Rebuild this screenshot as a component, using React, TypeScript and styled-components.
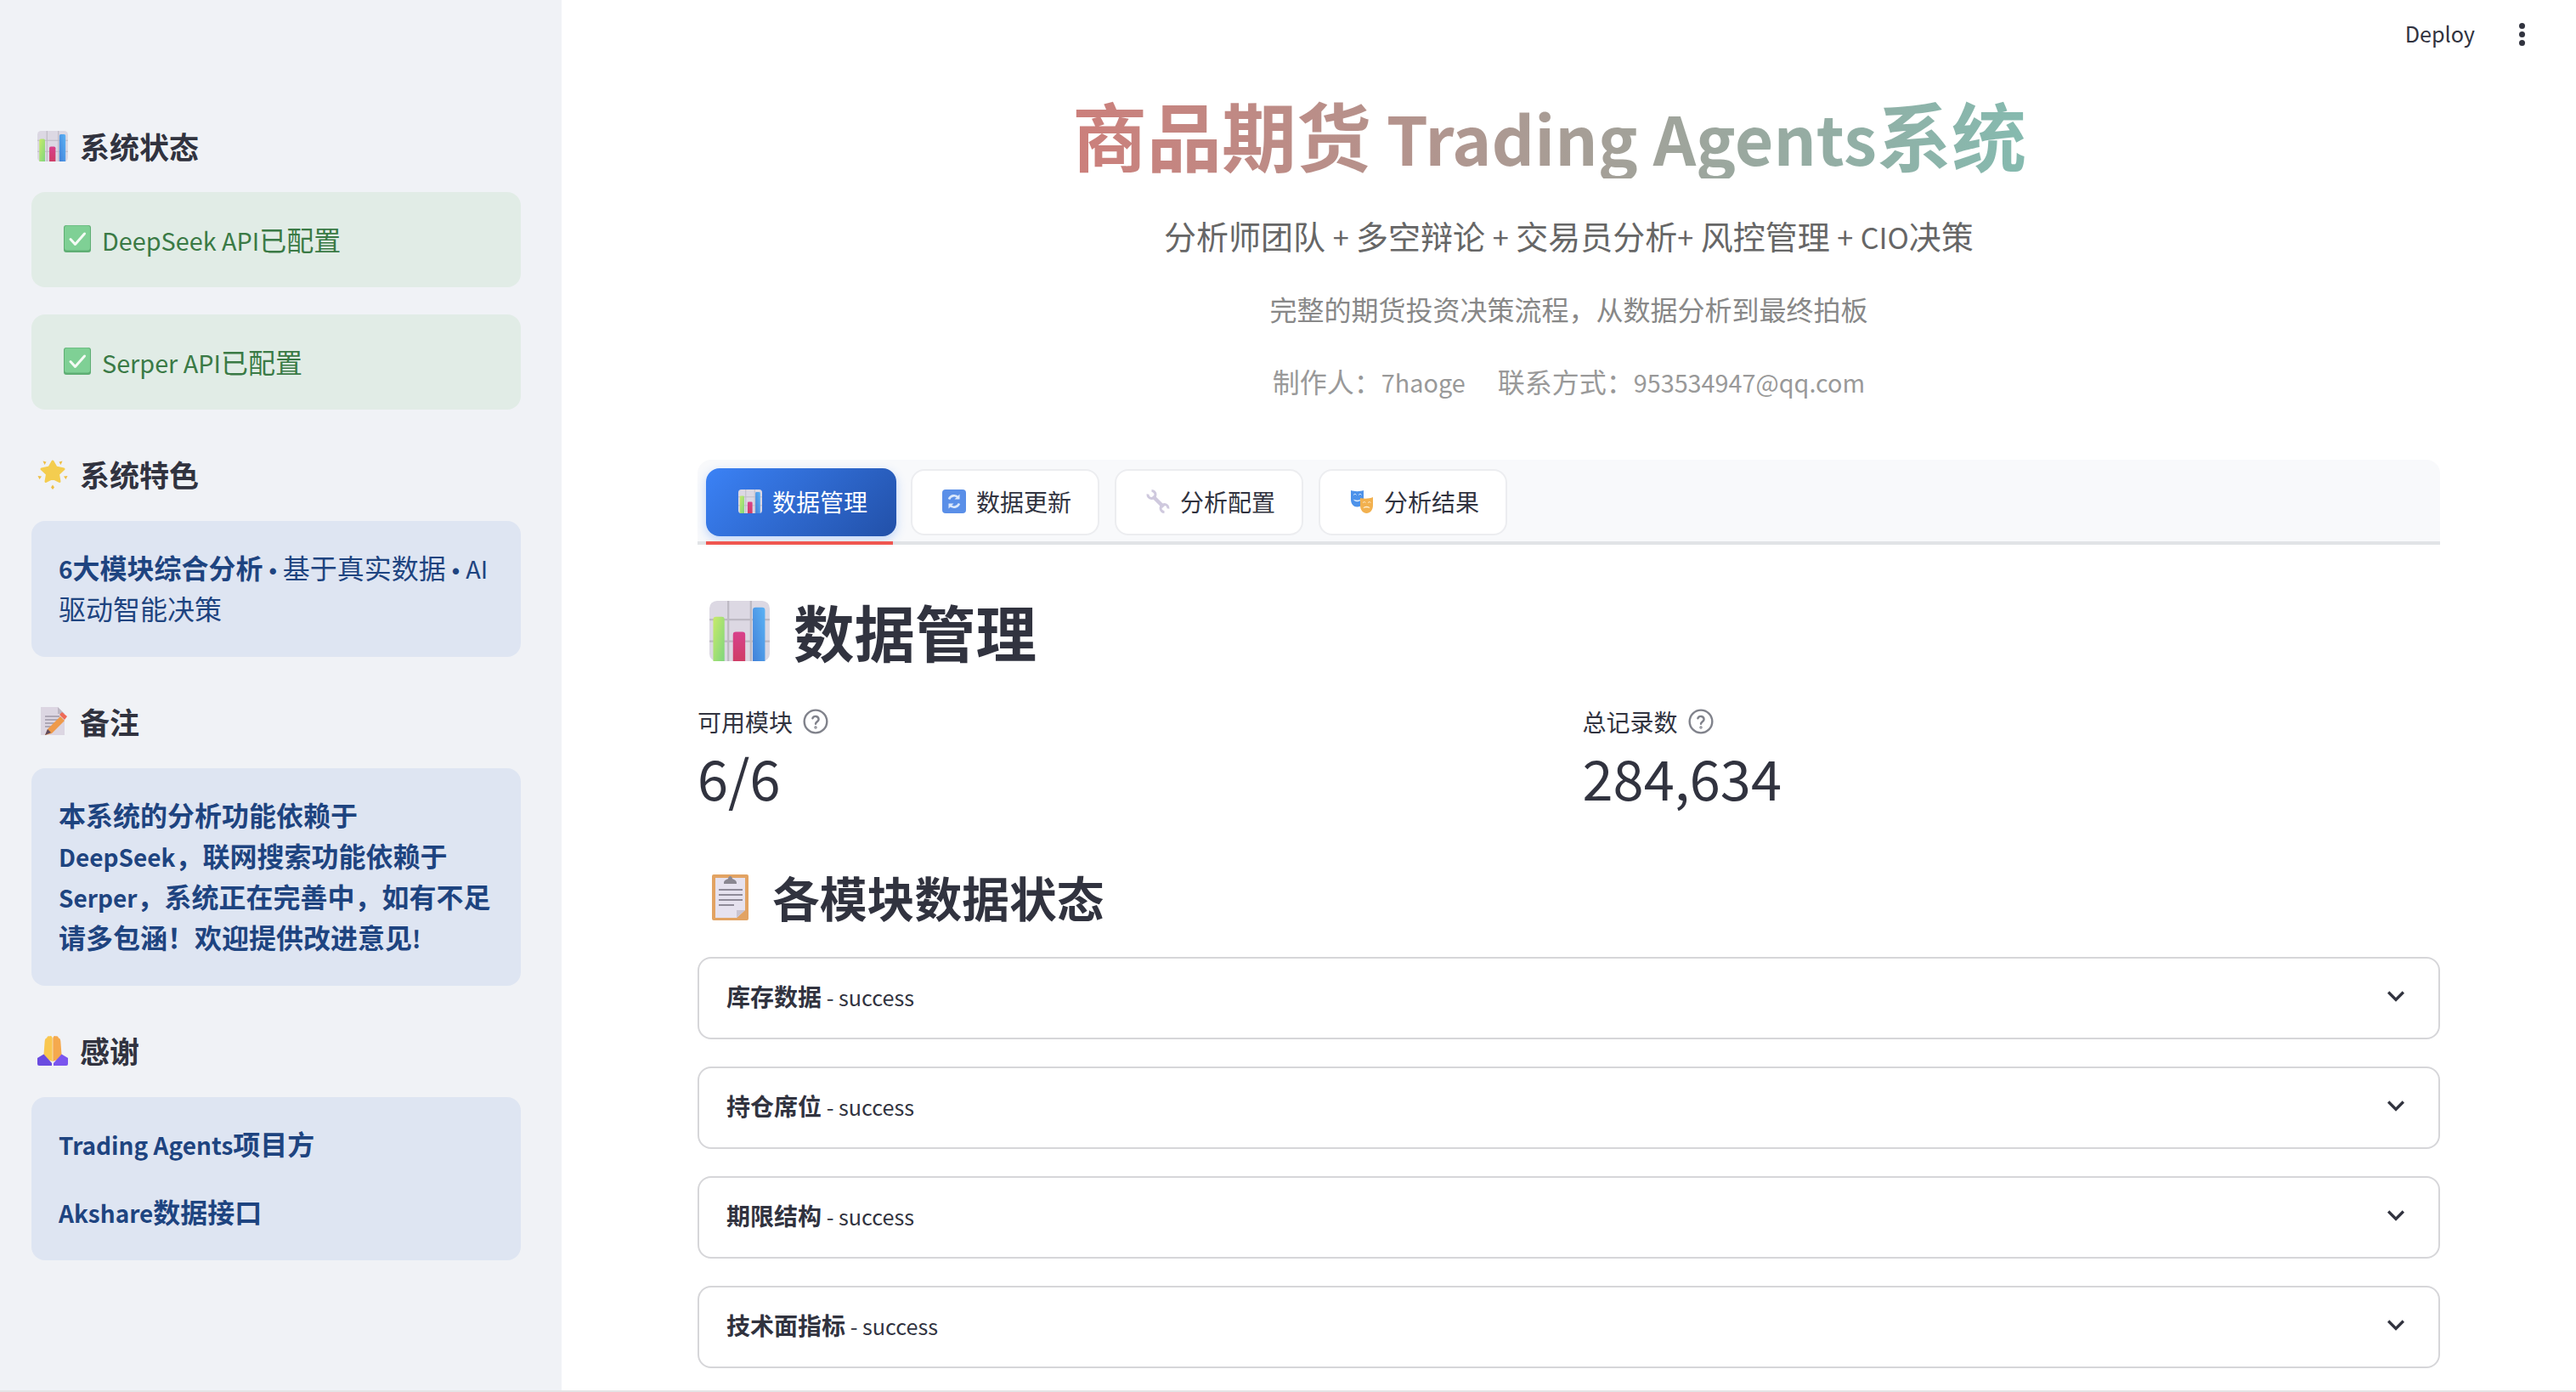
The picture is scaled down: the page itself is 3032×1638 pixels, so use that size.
import React from "react";
import styled, { createGlobalStyle } from "styled-components";

const GlobalStyle = createGlobalStyle`
	html, body {
		margin: 0;
		padding: 0;
		height: 100%;
		background: #fff;
		overflow: hidden;
	}

	body {
		font-family: "Noto Sans CJK SC", "Noto Sans", sans-serif;
		color: #31333f;
	}
`;

const BarChartIcon = ({ size }: { size: number }) => (
	<svg width={size} height={size} viewBox="0 0 32 32">
		<defs>
			<linearGradient id="barG" x1="0" y1="0" x2="1" y2="1">
				<stop offset="0" stopColor="#c8ea6a" />
				<stop offset="1" stopColor="#7fd67e" />
			</linearGradient>
			<linearGradient id="barP" x1="0" y1="0" x2="0" y2="1">
				<stop offset="0" stopColor="#d8418c" />
				<stop offset="1" stopColor="#cf3d66" />
			</linearGradient>
			<linearGradient id="barB" x1="1" y1="0" x2="0" y2="1">
				<stop offset="0" stopColor="#5cb3f5" />
				<stop offset="1" stopColor="#4180d8" />
			</linearGradient>
		</defs>
		<rect x="0" y="0" width="32" height="32" rx="4" fill="#dcd8e3" />
		<path d="M10 0v32M22 0v32M0 10h32M0 21.500h32" stroke="#bdb9c3" strokeWidth="1" />
		<path d="M2 10a1.500 1.500 0 0 1 1.500-1.500h3a1.500 1.500 0 0 1 1.500 1.500v22h-6z" fill="url(#barG)" />
		<path d="M12.500 18a1.500 1.500 0 0 1 1.500-1.500h3.500a1.500 1.500 0 0 1 1.500 1.500v14h-6.500z" fill="url(#barP)" />
		<path d="M23 5a1.500 1.500 0 0 1 1.500-1.500h3.500a1.500 1.500 0 0 1 1.500 1.500v27h-6.500z" fill="url(#barB)" />
	</svg>
);

const CheckIcon = () => (
	<svg width={32} height={32} viewBox="0 0 32 32">
		<rect x="0" y="0" width="32" height="32" rx="3" fill="#5fae74" />
		<rect x="1" y="0.500" width="30" height="29" rx="3" fill="#7fd095" />
		<path d="M8 16.500l5.500 6 11-12.500" fill="none" stroke="#f4fbf5" strokeWidth="3" strokeLinecap="round" strokeLinejoin="round" />
	</svg>
);

const StarIcon = () => (
	<svg width={36} height={36} viewBox="0 0 36 36">
		<path
			d="M18 3l4 7 9 2-6.500 6 1.500 8.500-8-4-8 4 1.500-8.500L5 12l9-2z"
			fill="#f4cd4f"
			stroke="#f4cd4f"
			strokeWidth="3"
			strokeLinejoin="round"
		/>
		<path d="M6.500 2.500l4 1-2 3.500z M29.500 2.500l-4 1 2 3.500z M0.500 20l4.500 0.500-2.500 3.500z M35.500 20l-4.500 0.500 2.500 3.500z M18 30.500l2 3-2 2.500-2-2.500z" fill="#eebf45" />
	</svg>
);

const MemoIcon = () => (
	<svg width={36} height={36} viewBox="0 0 36 36">
		<path d="M4 1h20l8 8v25H4z" fill="#dcd6e2" />
		<path d="M24 1l8 8h-8z" fill="#bdb7c3" />
		<path d="M9 12h17M9 16h17M9 20h14M9 24h8" stroke="#9d98a6" strokeWidth="1.600" />
		<path d="M9 34l3-7 15-15 5 5-15 15z" fill="#ee9a4a" />
		<path d="M26 10l3-3 6 5-3 4z" fill="#ee6a57" />
		<path d="M9 34l3-7 4 4z" fill="#5e4b5f" />
	</svg>
);

const HandsIcon = () => (
	<svg width={36} height={36} viewBox="0 0 36 36">
		<path d="M17.700 31V4c-.2-2.500-2-3.500-3.300-2.500-1.600-.8-3 0-3.200 2-1.600.2-2.300 1.500-2.500 3.500L7.500 23l5 6z" fill="#f9c74f" />
		<path d="M18.300 31V4c.2-2.500 2-3.500 3.300-2.500 1.600-.8 3 0 3.200 2 1.600.2 2.300 1.500 2.500 3.500l1.200 16-5 6z" fill="#f5a94d" />
		<path d="M0 27l7.500-4.500L17 33v3H2a2 2 0 0 1-2-2z" fill="#6a4be0" />
		<path d="M36 27l-7.500-4.500L19 33v3h15a2 2 0 0 0 2-2z" fill="#7a55ee" />
	</svg>
);

const RefreshIcon = () => (
	<svg width={28} height={28} viewBox="0 0 28 28">
		<rect x="0" y="0" width="28" height="28" rx="4" fill="#5a8fe8" />
		<path d="M8 11.500a6.500 6.500 0 0 1 11-2M20 16.500a6.500 6.500 0 0 1-11 2" fill="none" stroke="#dbe8fb" strokeWidth="2.600" />
		<path d="M20.500 5.500v6h-6zM7.500 22.500v-6h6z" fill="#dbe8fb" />
	</svg>
);

const WrenchIcon = () => (
	<svg width={28} height={28} viewBox="0 0 28 28" fill="none" stroke="#cfc9de">
		<path d="M8 8L20.500 20.500" strokeWidth="4.500" />
		<path d="M2 5.500A4.500 4.500 0 1 0 6.500 1.500" strokeWidth="3" />
		<path d="M26 22.500A4.500 4.500 0 1 0 21.500 26.500" strokeWidth="3" />
	</svg>
);

const MasksIcon = () => (
	<svg width={28} height={28} viewBox="0 0 28 28">
		<path d="M1 1c4 1.500 11 1.500 15 0v11c0 5-3.500 8.500-7.500 8.500S1 17 1 12z" fill="#4d92ea" />
		<path d="M4 11.500c1 3.500 8 3.500 9 0-2 1.500-7 1.500-9 0z" fill="#e6f1fd" />
		<path d="M4 6.500l2-1.500 1.500 1.500M10 6.500l2-1.500 1.500 1.500" stroke="#cfe3fb" fill="none" strokeWidth="1" />
		<path d="M12 10c4 1 11 1 15-1v10c0 5-3.500 9-7.500 9S12 24 12 19z" fill="#f2b14f" />
		<path d="M15.500 22c1-3 7-3 8 0-2-1-6-1-8 0z" fill="#fff2da" />
		<path d="M15 15.500l2-1 1.500 1M21 15.500l2-1 1.500 1" stroke="#fde6bf" fill="none" strokeWidth="1" />
	</svg>
);

const ClipboardIcon = () => (
	<svg width={44} height={56} viewBox="0 0 44 56">
		<rect x="0" y="2" width="43" height="54" rx="2" fill="#e2a363" />
		<path d="M4 6h35v38l-10 9H4z" fill="#e6e2ef" />
		<path d="M29 53l10-9H29z" fill="#c9c4d2" />
		<path d="M8 20h28M8 26h28M8 32h28M8 38h18" stroke="#8f8b99" strokeWidth="2" />
		<path d="M14 12c0-3 3-4 5-5 .5-4 4.500-4 5 0 2 1 5 2 5 5v1H14z" fill="#8a8791" />
	</svg>
);

const ChevronIcon = () => (
	<svg width={40} height={40} viewBox="0 0 24 24">
		<path d="M16.590 8.590L12 13.170 7.410 8.590 6 10l6 6 6-6z" fill="#31333f" />
	</svg>
);

const HelpIcon = () => (
	<svg width={32} height={32} viewBox="0 0 24 24" fill="none" stroke="#80828b" strokeWidth="1.800" strokeLinecap="round">
		<circle cx="12" cy="12" r="10" />
		<path d="M9.300 9.200a2.800 2.800 0 0 1 5.400.9c0 1.900-2.700 2.300-2.700 4" />
		<circle cx="12" cy="17.300" r="0.400" fill="#80828b" />
	</svg>
);

const tabs = [
	{ label: "数据管理", icon: <BarChartIcon size={28} />, active: true },
	{ label: "数据更新", icon: <RefreshIcon /> },
	{ label: "分析配置", icon: <WrenchIcon /> },
	{ label: "分析结果", icon: <MasksIcon /> },
];

const modules = ["库存数据", "持仓席位", "期限结构", "技术面指标"];

const App = () => {
	return (
		<Page>
			<GlobalStyle />
			<Sidebar>
				<SideHeading>
					<BarChartIcon size={36} />
					<span>系统状态</span>
				</SideHeading>
				<SuccessBox>
					<CheckIcon />
					<span><En>DeepSeek API</En>已配置</span>
				</SuccessBox>
				<SuccessBox>
					<CheckIcon />
					<span><En>Serper API</En>已配置</span>
				</SuccessBox>

				<SideHeading $spaced>
					<StarIcon />
					<span>系统特色</span>
				</SideHeading>
				<InfoBox>
					<p>
						<b><En>6</En>大模块综合分析</b> <Bullet>•</Bullet> 基于真实数据 <Bullet>•</Bullet> <En>AI</En>驱动智能决策
					</p>
				</InfoBox>

				<SideHeading $spaced>
					<MemoIcon />
					<span>备注</span>
				</SideHeading>
				<InfoBox>
					<p>
						<b>
							本系统的分析功能依赖于<En>DeepSeek</En>，联网搜索功能依赖于<En>Serper</En>，系统正在完善中，如有不足请多包涵！欢迎提供改进意见<En>!</En>
						</b>
					</p>
				</InfoBox>

				<SideHeading $spaced>
					<HandsIcon />
					<span>感谢</span>
				</SideHeading>
				<InfoBox>
					<p><b><En>Trading Agents</En>项目方</b></p>
					<p><b><En>Akshare</En>数据接口</b></p>
				</InfoBox>
			</Sidebar>

			<Main>
				<TopBar>
					<DeployLink>Deploy</DeployLink>
					<MenuDots>
						<i />
						<i />
						<i />
					</MenuDots>
				</TopBar>

				<Hero>
					<HeroTitle>商品期货<En> Trading Agents</En>系统</HeroTitle>
					<HeroSub>分析师团队 <En>+</En> 多空辩论 <En>+</En> 交易员分析<En>+</En> 风控管理 <En>+</En> <En>CIO</En>决策</HeroSub>
					<HeroNote>完整的期货投资决策流程，从数据分析到最终拍板</HeroNote>
					<HeroCredit>
						<span>制作人：<En>7haoge</En></span>
						<span>联系方式：<En>953534947@qq.com</En></span>
					</HeroCredit>
				</Hero>

				<TabBar>
					{tabs.map((tab) => (
						<TabButton key={tab.label} $active={tab.active}>
							{tab.icon}
							<span>{tab.label}</span>
						</TabButton>
					))}
					<TabHighlight />
				</TabBar>

				<PageHeading>
					<BarChartIcon size={71} />
					<span>数据管理</span>
				</PageHeading>

				<Metrics>
					<Metric>
						<MetricLabel>
							<span>可用模块</span>
							<HelpIcon />
						</MetricLabel>
						<MetricValue>6/6</MetricValue>
					</Metric>
					<Metric>
						<MetricLabel>
							<span>总记录数</span>
							<HelpIcon />
						</MetricLabel>
						<MetricValue>284,634</MetricValue>
					</Metric>
				</Metrics>

				<SectionHeading>
					<ClipboardIcon />
					<span>各模块数据状态</span>
				</SectionHeading>

				<ExpanderList>
					{modules.map((name) => (
						<Expander key={name}>
							<span>
								<b>{name}</b><En> - success</En>
							</span>
							<ChevronIcon />
						</Expander>
					))}
				</ExpanderList>
			</Main>
		</Page>
	);
};

const Page = styled.div`
	display: flex;
	height: 1636px;
	border-bottom: 2px solid #e4e4e6;
	overflow: hidden;
`;

const En = styled.span`
	font-size: 0.9em;
	line-height: 0;
`;

const Bullet = styled.span`
	font-family: "Liberation Sans", sans-serif;
	font-size: 0.8em;
	font-weight: 700;
	line-height: 0;
`;

const Sidebar = styled.aside`
	flex: 0 0 661px;
	box-sizing: border-box;
	padding: 145px 48px 0 37px;
	background: #f0f2f6;
`;

const SideHeading = styled.h3<{ $spaced?: boolean }>`
	display: flex;
	align-items: center;
	gap: 14px;
	height: 54px;
	margin: ${({ $spaced }) => ($spaced ? "49px" : "0")} 0 ${({ $spaced }) => ($spaced ? "28px" : "27px")} 7px;
	font-size: 35px;
	font-weight: 700;
	line-height: 54px;
`;

const SuccessBox = styled.div`
	display: flex;
	align-items: center;
	gap: 13px;
	box-sizing: border-box;
	height: 112px;
	padding: 0 38px 2px;
	border-radius: 16px;
	background: #e1ece6;
	color: #3a7a45;
	font-size: 32px;

	& + & {
		margin-top: 32px;
	}
`;

const InfoBox = styled.div`
	padding: 30px 32px 34px;
	border-radius: 16px;
	background: #dee5f2;
	color: #1e4480;
	font-size: 32px;
	line-height: 48px;

	p {
		margin: 0;
	}

	p + p {
		margin-top: 32px;
	}

	b ${En} {
		font-size: 0.875em;
	}
`;

const Main = styled.main`
	flex: 1;
	min-width: 0;
	padding: 0 160px;
`;

const TopBar = styled.header`
	display: flex;
	align-items: center;
	justify-content: flex-end;
	height: 80px;
	margin-right: -100px;
	color: #31333f;
`;

const DeployLink = styled.span`
	margin-bottom: 2px;
	font-size: 25.200px;
`;

const MenuDots = styled.div`
	display: flex;
	flex-direction: column;
	gap: 3px;
	margin-left: 52px;

	i {
		display: block;
		width: 7px;
		height: 7px;
		border-radius: 50%;
		background: #31333f;
	}
`;

const Hero = styled.section`
	display: flex;
	flex-direction: column;
	align-items: center;
	text-align: center;
`;

const HeroTitle = styled.h1`
	margin: 24px 46px 0 0;
	background: linear-gradient(90deg, #cc7f7b, #85baaf);
	-webkit-background-clip: text;
	background-clip: text;
	color: transparent;
	font-size: 88px;
	font-weight: 700;
	line-height: 106px;

	${En} {
		font-size: 0.895em;
	}
`;

const HeroSub = styled.div`
	margin-top: 37px;
	color: #666;
	font-size: 38px;
	line-height: 60px;
`;

const HeroNote = styled.div`
	margin-top: 32px;
	color: #888;
	font-size: 32px;
	line-height: 48px;
`;

const HeroCredit = styled.div`
	display: flex;
	gap: 38px;
	margin-top: 37px;
	color: #999;
	font-size: 32px;
	line-height: 48px;
`;

const TabBar = styled.nav`
	position: relative;
	display: flex;
	gap: 18px;
	box-sizing: border-box;
	height: 100px;
	margin-top: 69px;
	padding: 11px 0 0 11px;
	border-bottom: 4px solid #e1e3e6;
	border-radius: 16px 16px 0 0;
	background: #f8f9fb;
`;

const TabButton = styled.div<{ $active?: boolean }>`
	display: flex;
	align-items: center;
	justify-content: center;
	gap: 12px;
	box-sizing: border-box;
	width: 222px;
	height: 78px;
	padding: 0 0 3px 4px;
	border: 2px solid ${({ $active }) => ($active ? "transparent" : "#ecedf0")};
	border-radius: 16px;
	font-size: 28px;
	background: ${({ $active }) => ($active ? "linear-gradient(135deg, #3b82f6, #2250a8)" : "#fff")};
	color: ${({ $active }) => ($active ? "#fff" : "#31333f")};
	${({ $active }) =>
		$active &&
		`
		margin: -1px -1px;
		width: 224px;
		height: 80px;
		border: 0;
		box-shadow: 0 4px 12px rgba(59, 130, 246, 0.3);
	`}
`;

const TabHighlight = styled.div`
	position: absolute;
	left: 10px;
	bottom: -4px;
	width: 220px;
	height: 4px;
	background: #ef5650;
`;

const PageHeading = styled.h1`
	display: flex;
	align-items: center;
	gap: 28px;
	height: 90px;
	margin: 56px 0 0 14px;
	font-size: 71.500px;
	font-weight: 700;
	line-height: 90px;
`;

const Metrics = styled.section`
	display: grid;
	grid-template-columns: 1fr 1fr;
	gap: 32px;
	margin-top: 42px;
`;

const Metric = styled.div`
	display: flex;
	flex-direction: column;
`;

const MetricLabel = styled.div`
	display: flex;
	align-items: center;
	gap: 11px;
	height: 40px;
	font-size: 28px;
`;

const MetricValue = styled.div`
	font-size: 65px;
	line-height: 90px;
`;

const SectionHeading = styled.h2`
	display: flex;
	align-items: center;
	gap: 27px;
	height: 70px;
	margin: 61px 0 0 17px;
	font-size: 55.800px;
	font-weight: 700;
	line-height: 70px;
`;

const ExpanderList = styled.section`
	display: flex;
	flex-direction: column;
	gap: 32px;
	margin-top: 36px;
`;

const Expander = styled.div`
	display: flex;
	align-items: center;
	justify-content: space-between;
	box-sizing: border-box;
	height: 97px;
	padding: 0 30px 6px 32px;
	border: 2px solid #d6d6d9;
	border-radius: 16px;
	font-size: 28px;

	svg {
		margin-bottom: -1px;
	}
`;

export default App;
